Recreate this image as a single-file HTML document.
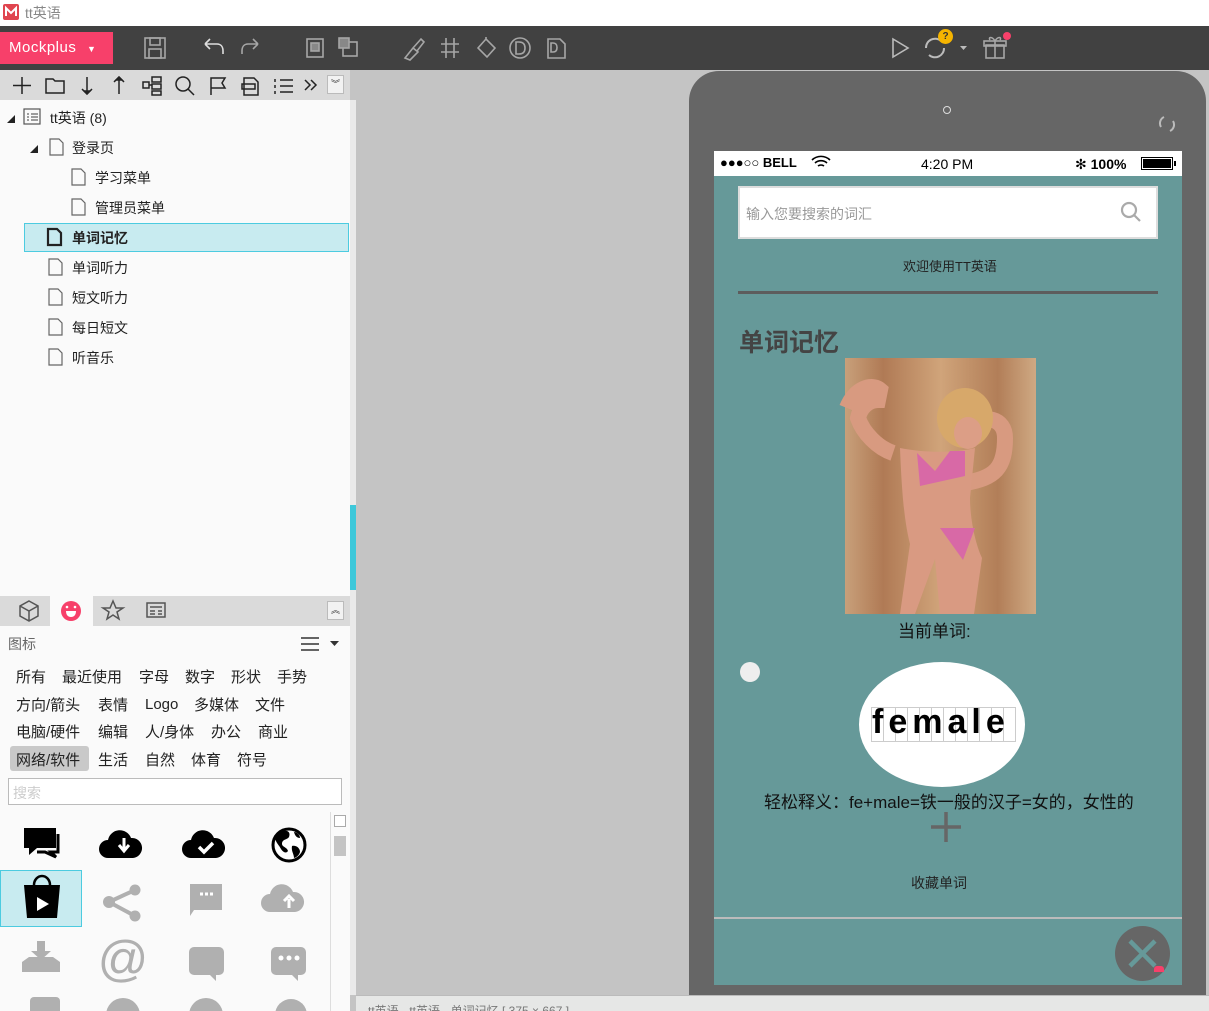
<!DOCTYPE html>
<html><head><meta charset="utf-8"><style>
*{margin:0;padding:0;box-sizing:border-box}
html,body{overflow:hidden}
body{width:1209px;height:1011px;overflow:hidden;position:relative;font-family:"Liberation Sans","Noto Sans CJK SC",sans-serif;background:#c4c4c4}
.a{position:absolute}
.t{font-size:14px;color:#222;white-space:nowrap}
svg{position:absolute;overflow:visible}
</style></head><body>
<!-- title bar -->
<div class="a" style="left:0;top:0;width:1209px;height:26px;background:#fff"></div>
<div class="a" style="left:3px;top:4px;width:16px;height:16px;background:#e0454f;border-radius:2px"></div>
<svg style="left:3px;top:4px" width="16" height="16"><path d="M3 12V4l5 5 5-5v8" stroke="#fff" stroke-width="2" fill="none"/></svg>
<div class="a" style="left:25px;top:3px;font-size:14px;color:#888">tt英语</div>
<!-- toolbar -->
<div class="a" style="left:0;top:26px;width:1209px;height:44px;background:#414141"></div>
<div class="a" style="left:0;top:32px;width:113px;height:32px;background:#f7406a;color:#fff;font-size:15px;line-height:32px;padding-left:9px;letter-spacing:0.5px">Mockplus <span style="font-size:9px;margin-left:6px">▼</span></div>
<svg style="left:0;top:26px" width="1209" height="44" fill="none" stroke="#a6a6a6" stroke-width="1.6">
<rect x="145" y="12" width="20" height="20"/><rect x="150" y="12" width="10" height="7"/><rect x="149" y="23" width="12" height="9"/>
<path d="M205 18h12c4 0 6 3 6 7v3M205 18l5-5M205 18l5 5" stroke="#ddd"/>
<path d="M258 18h-10c-4 0-6 3-6 7v3M258 18l-5-5M258 18l-5 5"/>
<rect x="307" y="13" width="16" height="18"/><rect x="311" y="17" width="8" height="8" fill="#888"/>
<rect x="343" y="16" width="14" height="14"/><rect x="339" y="12" width="10" height="10" fill="#888"/>
<path d="M405 32l8-10 5 4-8 8zM413 22l8-9 3 3-7 9"/>
<path d="M446 12v20M454 12v20M441 18h18M441 26h18"/>
<path d="M478 22l8-9 9 9-8 9zM486 13v-2"/>
<circle cx="520" cy="22" r="10"/><path d="M516 16v12h3c4 0 6-2 6-6s-2-6-6-6z"/>
<path d="M548 13h12l5 5v14h-17zM551 17v9h2c3 0 4-2 4-4.5s-1-4.5-4-4.5z"/>
<path d="M893 13l15 9-15 9z" stroke="#bbb"/>
<path d="M926 22a9 9 0 0 1 15-7M944 22a9 9 0 0 1-15 7" stroke="#bbb" stroke-width="2"/>
<path d="M960 20h7l-3.5 4z" fill="#bbb" stroke="none"/>
<rect x="986" y="19" width="18" height="13"/><rect x="984" y="15" width="22" height="5"/><path d="M995 15v17M995 15c-3-5-7-4-5-1M995 15c3-5 7-4 5-1"/>
</svg>
<div class="a" style="left:938px;top:29px;width:15px;height:15px;border-radius:50%;background:#f5b400;color:#333;font-size:10px;font-weight:bold;text-align:center;line-height:15px">?</div>
<div class="a" style="left:1003px;top:32px;width:8px;height:8px;border-radius:50%;background:#f7406a"></div>
<!-- left panel -->
<div class="a" style="left:0;top:70px;width:350px;height:30px;background:#dadada"></div>
<svg style="left:0;top:70px" width="350" height="30" fill="none" stroke="#222" stroke-width="1.5">
<path d="M22 7v17M13 15.5h18"/>
<path d="M46 9h7l2 2h9v12H46z"/>
<path d="M87 7v16M82 19l5 5 5-5" /><path d="M84 21l3 3 3-3z" fill="#222"/>
<path d="M119 24V8M114 12l5-5 5 5"/><path d="M116 10l3-3 3 3z" fill="#222"/>
<rect x="143" y="12" width="6" height="6"/><rect x="152" y="7" width="9" height="5"/><rect x="152" y="14" width="9" height="5"/><rect x="152" y="21" width="9" height="4"/><path d="M149 15h3"/>
<circle cx="183" cy="14" r="7"/><path d="M188 19l6 6"/>
<path d="M211 25V8h14l-3 5 3 5h-14"/>
<path d="M244 8h10l4 4v13h-14z"/><rect x="242" y="14" width="13" height="5"/>
<path d="M280 10h13M280 16h13M280 22h13M275 9v3M275 15v3M275 21v3"/>
<path d="M305 10l5 5-5 5M311 10l5 5-5 5"/>
</svg>
<div class="a" style="left:327px;top:75px;width:17px;height:19px;background:#f2f2f2;border:1px solid #bbb;font-size:9px;text-align:center;line-height:17px;color:#333">︾</div>
<div class="a" style="left:0;top:100px;width:350px;height:490px;background:#fafafa"></div>
<div class="a" style="left:24px;top:223px;width:325px;height:29px;background:#c8ebf0;border:1px solid #4ccbe0"></div>
<svg style="left:0;top:100px" width="350" height="280" fill="none" stroke="#666" stroke-width="1.2">
<path d="M7 23l8-8v8z" fill="#222" stroke="none"/>
<rect x="24" y="9" width="16" height="15" stroke="#555"/><path d="M27 14h2M31 14h7M27 17h2M31 17h7M27 20h2M31 20h7"/>
<path d="M30 53l8-8v8z" fill="#222" stroke="none"/>
<path d="M50 39h9l4 4v12H50z"/>
<path d="M72 69h9l4 4v12H72z"/><path d="M72 99h9l4 4v12H72z"/>
<path d="M48 129h9l4 4v12H48z" stroke="#222" stroke-width="2.2"/>
<path d="M49 159h9l4 4v12H49z"/><path d="M49 189h9l4 4v12H49z"/><path d="M49 219h9l4 4v12H49z"/><path d="M49 249h9l4 4v12H49z"/>
</svg>
<div class="a t" style="left:50px;top:108px">tt英语 (8)</div>
<div class="a t" style="left:72px;top:138px">登录页</div>
<div class="a t" style="left:95px;top:168px">学习菜单</div>
<div class="a t" style="left:95px;top:198px">管理员菜单</div>
<div class="a t" style="left:72px;top:228px;font-weight:bold">单词记忆</div>
<div class="a t" style="left:72px;top:258px">单词听力</div>
<div class="a t" style="left:72px;top:288px">短文听力</div>
<div class="a t" style="left:72px;top:318px">每日短文</div>
<div class="a t" style="left:72px;top:348px">听音乐</div>
<div class="a" style="left:350px;top:100px;width:6px;height:895px;background:#eaeaea"></div>
<div class="a" style="left:350px;top:505px;width:6px;height:85px;background:#3ec8da"></div>
<!-- lower panel -->
<div class="a" style="left:0;top:590px;width:350px;height:421px;background:#fafafa"></div>
<div class="a" style="left:0;top:596px;width:350px;height:30px;background:#dadada"></div>
<div class="a" style="left:50px;top:596px;width:43px;height:30px;background:#fafafa"></div>
<svg style="left:0;top:596px" width="350" height="30" fill="none" stroke="#555" stroke-width="1.5">
<path d="M29 5l9 5v10l-9 5-9-5V10zM20 10l9 5 9-5M29 15v10"/>
<circle cx="71" cy="15" r="10" fill="#f7406a" stroke="none"/><path d="M66 15h10c0 4-2 6-5 6s-5-2-5-6z" fill="#fff" stroke="none"/><circle cx="67" cy="11" r="1.3" fill="#fff" stroke="none"/><circle cx="75" cy="11" r="1.3" fill="#fff" stroke="none"/>
<path d="M113 5l3 7h7l-6 4 2 7-6-4-6 4 2-7-6-4h7z"/>
<rect x="147" y="7" width="18" height="14"/><path d="M150 11h12M150 15h5M158 15h4M150 18h5M158 18h4"/>
</svg>
<div class="a" style="left:327px;top:601px;width:17px;height:19px;background:#f2f2f2;border:1px solid #bbb;font-size:9px;text-align:center;line-height:17px;color:#333">︽</div>
<div class="a" style="left:8px;top:634px;font-size:14px;color:#666">图标</div>
<svg style="left:300px;top:636px" width="45" height="16" stroke="#333" stroke-width="1.6"><path d="M1 2h18M1 8h18M1 14h18"/><path d="M30 5h9l-4.5 5z" fill="#333" stroke="none"/></svg>
<div class="a" style="left:10px;top:746px;width:79px;height:25px;background:#c9c9c9;border-radius:3px"></div>
<div class="a t" style="left:16px;top:666px;font-size:15px">所有</div>
<div class="a t" style="left:62px;top:666px;font-size:15px">最近使用</div>
<div class="a t" style="left:139px;top:666px;font-size:15px">字母</div>
<div class="a t" style="left:185px;top:666px;font-size:15px">数字</div>
<div class="a t" style="left:231px;top:666px;font-size:15px">形状</div>
<div class="a t" style="left:277px;top:666px;font-size:15px">手势</div>
<div class="a t" style="left:16px;top:694px;font-size:15px">方向/箭头</div>
<div class="a t" style="left:98px;top:694px;font-size:15px">表情</div>
<div class="a t" style="left:145px;top:696px;font-size:15px">Logo</div>
<div class="a t" style="left:194px;top:694px;font-size:15px">多媒体</div>
<div class="a t" style="left:255px;top:694px;font-size:15px">文件</div>
<div class="a t" style="left:16px;top:721px;font-size:15px">电脑/硬件</div>
<div class="a t" style="left:98px;top:721px;font-size:15px">编辑</div>
<div class="a t" style="left:145px;top:721px;font-size:15px">人/身体</div>
<div class="a t" style="left:211px;top:721px;font-size:15px">办公</div>
<div class="a t" style="left:258px;top:721px;font-size:15px">商业</div>
<div class="a t" style="left:16px;top:749px;font-size:15px">网络/软件</div>
<div class="a t" style="left:98px;top:749px;font-size:15px">生活</div>
<div class="a t" style="left:145px;top:749px;font-size:15px">自然</div>
<div class="a t" style="left:191px;top:749px;font-size:15px">体育</div>
<div class="a t" style="left:237px;top:749px;font-size:15px">符号</div>
<div class="a" style="left:8px;top:778px;width:334px;height:27px;background:#fff;border:1px solid #bbb;font-size:14px;color:#ccc;padding:4px 4px">搜索</div>
<div class="a" style="left:330px;top:812px;width:20px;height:199px;border-left:1px solid #ddd;background:#fafafa"></div>
<div class="a" style="left:334px;top:815px;width:12px;height:12px;border:1px solid #aaa;background:#fff"></div>
<div class="a" style="left:334px;top:836px;width:12px;height:20px;background:#c4c4c4"></div>
<div class="a" style="left:0;top:870px;width:82px;height:57px;background:#c8ebf0;border:1px solid #4ccbe0"></div>
<svg style="left:0;top:810px" width="330" height="201">
<g fill="#000">
<path d="M24 18h32v20H37l-8 7v-7h-5z"/><path d="M58 24v18h-7l5 5-11-5h-8" fill="none" stroke="#000" stroke-width="3"/>
<path d="M108 48a9 9 0 0 1 0-18 12 12 0 0 1 23-2 10 10 0 0 1 2 20z"/>
<path d="M191 48a9 9 0 0 1 0-18 12 12 0 0 1 23-2 10 10 0 0 1 2 20z"/>
<circle cx="289" cy="35" r="16" fill="#fff" stroke="#000" stroke-width="3"/>
<path d="M281 22c6-3 10 0 8 5-2 3-7 2-7 7 0 3 5 3 6 7-2 3-5 1-7-2-2-4-5-6-6-11 1-3 3-5 6-6zM292 36c4-1 8 2 8 6-1 3-3 5-6 6 0-4-3-7-2-12zM294 22c3 0 6 3 6 6-3 0-5-2-6-6z"/>
<path d="M24 75h36l-3 33H27z"/><path d="M34 75a8 9 0 0 1 16 0" fill="none" stroke="#000" stroke-width="2.5"/>
</g>
<path d="M124 28v12M119 35l5 6 5-6" stroke="#fff" stroke-width="3" fill="none"/>
<path d="M199 37l5 5 9-9" stroke="#fff" stroke-width="3.5" fill="none"/>
<path d="M37 87v14l12-7z" fill="#fff"/>
<g fill="#b0b0b0">
<circle cx="109" cy="92" r="6"/><circle cx="135" cy="80" r="5.5"/><circle cx="135" cy="106" r="5.5"/>
<path d="M109 92l26-12M109 92l26 14" stroke="#b0b0b0" stroke-width="4"/>
<path d="M190 74h32v26h-28l-4 6z"/>
<path d="M270 102a9 9 0 0 1 0-18 12 12 0 0 1 23-2 10 10 0 0 1 2 20z"/>
<path d="M22 152v10h38v-10l-7-5H29z"/><rect x="37" y="131" width="8" height="12"/><path d="M31 141h20l-10 9z"/>
<path d="M189 142a5 5 0 0 1 5-5h25a5 5 0 0 1 5 5v18a5 5 0 0 1-5 5h-3v6l-6-6h-16a5 5 0 0 1-5-5z"/>
<path d="M271 142a5 5 0 0 1 5-5h25a5 5 0 0 1 5 5v18a5 5 0 0 1-5 5h-3v6l-6-6h-16a5 5 0 0 1-5-5z"/>
<rect x="30" y="187" width="30" height="20" rx="4"/><circle cx="123" cy="205" r="17"/><circle cx="206" cy="205" r="17"/><circle cx="291" cy="205" r="16"/>
</g>
<path d="M200 84h3M205 84h3M210 84h3" stroke="#fff" stroke-width="3"/>
<path d="M289 98v-9M284 91l5-5 5 5" stroke="#fff" stroke-width="3" fill="none"/>
<text x="123" y="166" font-family="Liberation Sans" font-size="50" fill="#b0b0b0" text-anchor="middle">@</text>
<circle cx="281" cy="148" r="2.5" fill="#fff"/><circle cx="289" cy="148" r="2.5" fill="#fff"/><circle cx="297" cy="148" r="2.5" fill="#fff"/>
</svg>
<!-- status bar bottom -->
<div class="a" style="left:356px;top:995px;width:853px;height:16px;background:#e6e7e6;border-top:1px solid #bbb;overflow:hidden"><div style="position:absolute;left:12px;top:6px;font-size:12px;color:#777;white-space:nowrap">tt英语 · tt英语 · 单词记忆 [ 375 × 667 ]</div></div>
<!-- phone -->
<div class="a" style="left:689px;top:71px;width:517px;height:924px;background:#666;border-radius:30px 30px 0 0"></div>
<div class="a" style="left:943px;top:106px;width:8px;height:8px;border:1.5px solid #ddd;border-radius:50%"></div>
<svg style="left:1156px;top:114px" width="22" height="20" fill="none" stroke="#bbb" stroke-width="2"><path d="M8 3a7 7 0 0 0-3 10M14 17a7 7 0 0 0 3-10"/></svg>
<div class="a" style="left:714px;top:151px;width:468px;height:834px;background:#669999"></div>
<div class="a" style="left:714px;top:151px;width:468px;height:25px;background:#fff"></div>
<div class="a" style="left:720px;top:155px;font-size:13px;color:#000">●●●○○ <b>BELL</b></div>
<svg style="left:811px;top:155px" width="20" height="14" fill="none" stroke="#000" stroke-width="1.6"><path d="M1 5a13 13 0 0 1 18 0M4 8a9 9 0 0 1 12 0M7 11a5 5 0 0 1 6 0"/></svg>
<div class="a" style="left:921px;top:156px;font-size:14px;color:#000">4:20 PM</div>
<div class="a" style="left:1075px;top:156px;font-size:14px;color:#000">✻ <b>100%</b></div>
<div class="a" style="left:1141px;top:157px;width:32px;height:13px;border:1.5px solid #000;padding:1px"><div style="width:100%;height:100%;background:#000"></div></div>
<div class="a" style="left:1174px;top:161px;width:2px;height:5px;background:#000"></div>
<div class="a" style="left:738px;top:186px;width:420px;height:53px;background:#fff;border:2px solid #ddd"></div>
<div class="a" style="left:746px;top:204px;font-size:14px;color:#999">输入您要搜索的词汇</div>
<svg style="left:1120px;top:201px" width="22" height="22" fill="none" stroke="#aaa" stroke-width="2.2"><circle cx="9" cy="9" r="7"/><path d="M14 14l6 6"/></svg>
<div class="a" style="left:903px;top:256px;font-size:13px;color:#222">欢迎使用TT英语</div>
<div class="a" style="left:738px;top:291px;width:420px;height:3px;background:#5d5d5d"></div>
<div class="a" style="left:739px;top:323px;font-size:25px;font-weight:bold;color:#444">单词记忆</div>
<div class="a" style="left:845px;top:358px;width:191px;height:256px;background:linear-gradient(90deg,#c8a07a,#b07a55 20%,#d0a47a 50%,#b27e58 80%,#cfa983)"></div>
<svg style="left:845px;top:358px" width="191" height="256">
<path d="M2 50c8-20 25-25 33-18l-2 10c-10 0-18 8-20 18 5 15 20 30 35 35" fill="none" stroke="#d89a80" stroke-width="16"/>
<path d="M120 70c20-15 40-10 40 10 0 30-10 40-40 45" fill="none" stroke="#d89a80" stroke-width="16"/>
<ellipse cx="120" cy="60" rx="28" ry="30" fill="#d7a86a"/>
<ellipse cx="123" cy="75" rx="14" ry="16" fill="#dc9e86"/>
<path d="M55 90c25 5 55 5 75 0l-5 50c0 20 5 45 12 60l-8 56H95l-5-55-20 55H55l10-70c-5-20-8-45-10-96z" fill="#d99a82"/>
<path d="M72 95l18 18 15-20 15 0 0 25-45 10z" fill="#d869a6"/>
<path d="M95 170h35l-12 32z" fill="#d869a6"/>
</svg>
<div class="a" style="left:898px;top:617px;font-size:17px;color:#111">当前单词:</div>
<div class="a" style="left:740px;top:662px;width:20px;height:20px;border-radius:50%;background:#eee"></div>
<div class="a" style="left:859px;top:662px;width:166px;height:125px;border-radius:50%;background:#fff"></div>
<div class="a" style="left:871px;top:707px;width:145px;height:35px;border:1px solid #ccc;background:repeating-linear-gradient(90deg,transparent 0 11px,#ccc 11px 12px)"></div>
<div class="a" style="left:872px;top:702px;font-size:34px;font-weight:bold;color:#000;letter-spacing:5px;line-height:40px">female</div>
<div class="a" style="left:764px;top:788px;font-size:17px;color:#111">轻松释义：fe+male=铁一般的汉子=女的，女性的</div>
<svg style="left:930px;top:811px" width="32" height="32" stroke="#666" stroke-width="3.5"><path d="M16 1v30M1 16h30"/></svg>
<div class="a" style="left:911px;top:873px;font-size:14px;color:#222">收藏单词</div>
<div class="a" style="left:714px;top:917px;width:468px;height:2px;background:#bbb"></div>
<div class="a" style="left:1115px;top:926px;width:55px;height:55px;border-radius:50%;background:#666"></div>
<svg style="left:1115px;top:926px" width="55" height="55" stroke="#669999" stroke-width="4.5"><path d="M15 15l25 25M40 15L15 40"/></svg>
<div class="a" style="left:1154px;top:966px;width:10px;height:6px;background:#f7406a;border-radius:3px 3px 0 0"></div>
</body></html>
